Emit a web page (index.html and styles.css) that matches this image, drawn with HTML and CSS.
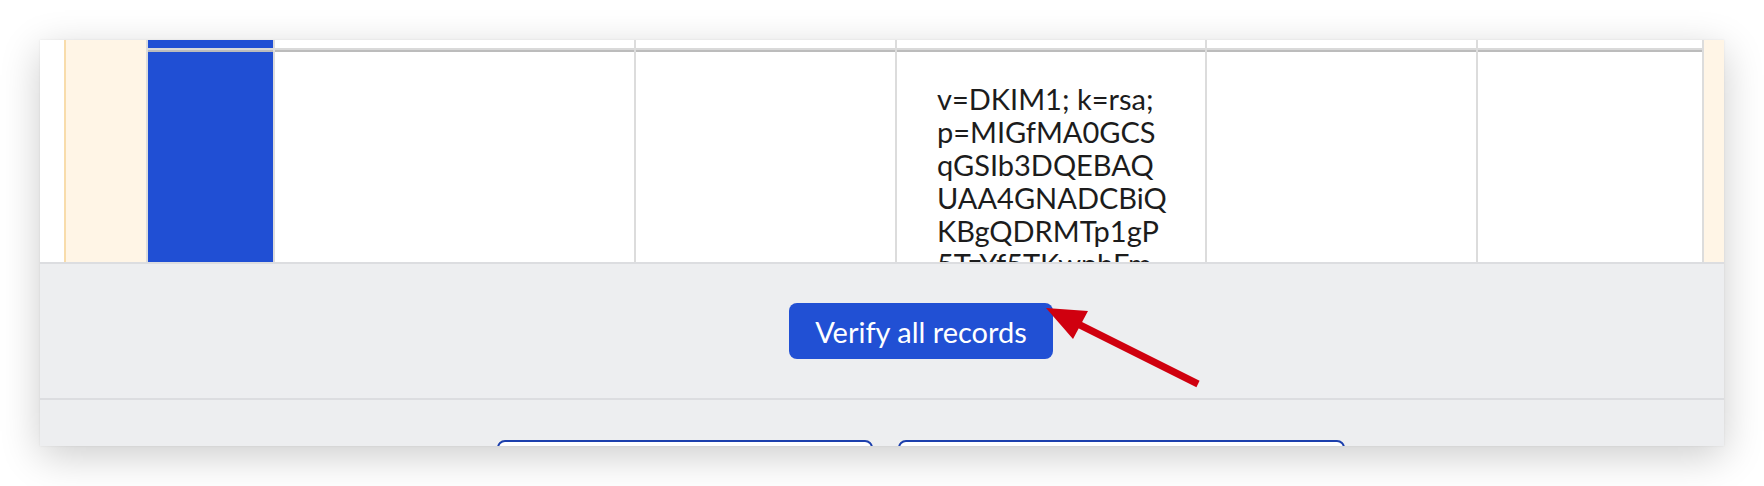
FILE: index.html
```html
<!DOCTYPE html>
<html lang="en">
<head>
<meta charset="utf-8">
<title>DNS records</title>
<link rel="stylesheet" href="styles.css">
</head>
<body>
<div class="window">
  <div class="table-wrap">
    <div class="pin pin-left"></div>
    <div class="grid">
      <div class="hcell hcell-blue"></div>
      <div class="hcell"></div>
      <div class="hcell"></div>
      <div class="hcell"></div>
      <div class="hcell"></div>
      <div class="hcell hcell-last"></div>
      <div class="cell cell-blue"></div>
      <div class="cell"></div>
      <div class="cell"></div>
      <div class="cell cell-value">v=DKIM1; k=rsa; p=MIGfMA0GCSqGSIb3DQEBAQUAA4GNADCBiQKBgQDRMTp1gP5TzYf5TKwnbFmQ7xJ</div>
      <div class="cell"></div>
      <div class="cell cell-last"></div>
    </div>
    <div class="pin pin-right"></div>
  </div>
  <div class="verify">
    <button class="btn-primary" type="button">Verify all records</button>
  </div>
  <div class="actions">
    <button class="btn-outline btn-back" type="button"></button>
    <button class="btn-outline btn-next" type="button"></button>
  </div>
</div>
<svg class="annotation" width="1764" height="486" viewBox="0 0 1764 486">
  <line x1="1078" y1="324" x2="1198" y2="384" stroke="#d0000f" stroke-width="7"/>
  <polygon points="1046,308 1088,311 1073,339" fill="#d0000f"/>
</svg>
</body>
</html>
```
FILE: styles.css
```css
* { box-sizing: border-box; }

html, body {
  margin: 0;
  background: #ffffff;
}

body {
  position: relative;
  width: 1764px;
  height: 486px;
  overflow: hidden;
  padding: 40px 40px 0 40px;
  font-family: Lato, "Open Sans", sans-serif;
}

.window {
  width: 1684px;
  height: 406px;
  overflow: hidden;
  background: #ffffff;
  box-shadow: 0 10px 38px rgba(0, 0, 0, 0.2), 0 0 2px rgba(0, 0, 0, 0.08);
}

.table-wrap {
  display: flex;
  height: 222px;
  padding-left: 24px;
}

.pin {
  background: #fff5e6;
  height: 100%;
}

.pin-left {
  width: 82px;
  border-left: 2px solid #f8dcab;
}

.pin-right {
  width: 20px;
}

.grid {
  display: grid;
  grid-template-columns: 127px 361px 261px 310px 271px 228px;
  grid-template-rows: 12px 210px;
}

.hcell {
  border-left: 2px solid #dcdcdc;
  background: linear-gradient(#ffffff 0 8px, #d9d9d9 8px 10px, #bcbcbc 10px 12px);
}

.hcell-blue {
  background: linear-gradient(#204fd4 0 8px, #d9d9d9 8px 10px, #bcbcbc 10px 12px);
}

.hcell-last,
.cell-last {
  border-right: 2px solid #dcdcdc;
}

.cell {
  border-left: 2px solid #dcdcdc;
  background: #ffffff;
  overflow: hidden;
}

.cell-blue {
  background: #204fd4;
}

.cell-value {
  padding: 30px 38px 0 40px;
  font-size: 29px;
  line-height: 33px;
  color: #1c1c1c;
  overflow-wrap: anywhere;
}

.verify {
  height: 138px;
  border-top: 2px solid #dcdde0;
  border-bottom: 2px solid #dcdde0;
  background: #edeef0;
  display: flex;
  align-items: center;
  justify-content: center;
  padding-left: 78px;
}

.btn-primary {
  width: 264px;
  height: 56px;
  border: none;
  border-radius: 8px;
  background: #2150d4;
  color: #ffffff;
  font-family: Lato, "Open Sans", sans-serif;
  font-size: 29px;
  padding: 0;
}

.actions {
  height: 46px;
  background: #edeef0;
  display: flex;
  justify-content: center;
  gap: 25px;
  padding: 40px 0 0 78px;
}

.btn-outline {
  height: 56px;
  border: 2px solid #1d40ad;
  border-radius: 8px;
  background: #ffffff;
  padding: 0;
}

.btn-back { width: 376px; }
.btn-next { width: 447px; }

.annotation {
  position: absolute;
  left: 0;
  top: 0;
  pointer-events: none;
}
```
